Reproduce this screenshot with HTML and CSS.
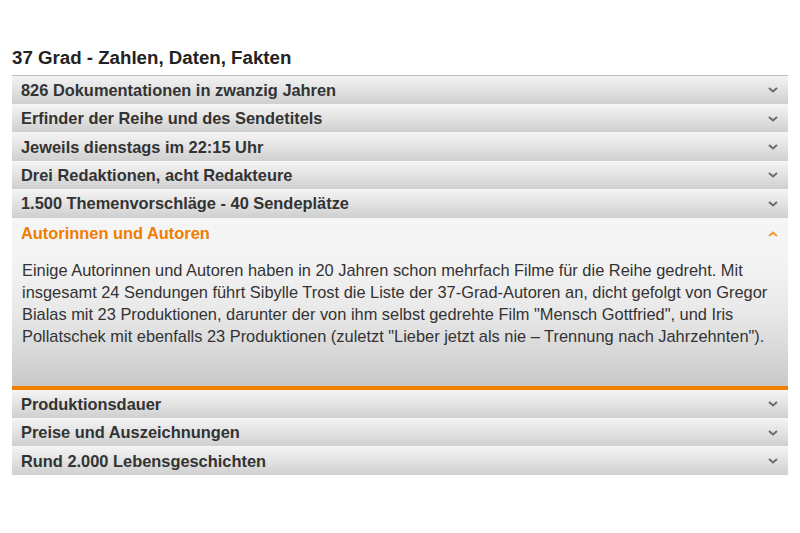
FILE: index.html
```html
<!DOCTYPE html>
<html lang="de">
<head>
<meta charset="utf-8">
<title>37 Grad - Zahlen, Daten, Fakten</title>
<link rel="stylesheet" href="styles.css">
</head>
<body>
<div class="page">
  <h2 class="title">37 Grad - Zahlen, Daten, Fakten</h2>
  <div class="accordion">
    <div class="item"><div class="head"><span>826 Dokumentationen in zwanzig Jahren</span><svg class="chev" viewBox="0 0 10 6"><path d="M1 1 L5 4.5 L9 1"/></svg></div></div>
    <div class="item"><div class="head"><span>Erfinder der Reihe und des Sendetitels</span><svg class="chev" viewBox="0 0 10 6"><path d="M1 1 L5 4.5 L9 1"/></svg></div></div>
    <div class="item"><div class="head"><span>Jeweils dienstags im 22:15 Uhr</span><svg class="chev" viewBox="0 0 10 6"><path d="M1 1 L5 4.5 L9 1"/></svg></div></div>
    <div class="item"><div class="head"><span>Drei Redaktionen, acht Redakteure</span><svg class="chev" viewBox="0 0 10 6"><path d="M1 1 L5 4.5 L9 1"/></svg></div></div>
    <div class="item"><div class="head"><span>1.500 Themenvorschläge - 40 Sendeplätze</span><svg class="chev" viewBox="0 0 10 6"><path d="M1 1 L5 4.5 L9 1"/></svg></div></div>
    <div class="item open">
      <div class="head"><span>Autorinnen und Autoren</span><svg class="chev" viewBox="0 0 10 6"><path d="M1 5 L5 1.5 L9 5"/></svg></div>
      <div class="body"><p>Einige Autorinnen und Autoren haben in 20 Jahren schon mehrfach Filme für die Reihe gedreht. Mit insgesamt 24 Sendungen führt Sibylle Trost die Liste der 37-Grad-Autoren an, dicht gefolgt von Gregor Bialas mit 23 Produktionen, darunter der von ihm selbst gedrehte Film "Mensch Gottfried", und Iris Pollatschek mit ebenfalls 23 Produktionen (zuletzt "Lieber jetzt als nie – Trennung nach Jahrzehnten").</p></div>
    </div>
    <div class="item"><div class="head"><span>Produktionsdauer</span><svg class="chev" viewBox="0 0 10 6"><path d="M1 1 L5 4.5 L9 1"/></svg></div></div>
    <div class="item"><div class="head"><span>Preise und Auszeichnungen</span><svg class="chev" viewBox="0 0 10 6"><path d="M1 1 L5 4.5 L9 1"/></svg></div></div>
    <div class="item"><div class="head"><span>Rund 2.000 Lebensgeschichten</span><svg class="chev" viewBox="0 0 10 6"><path d="M1 1 L5 4.5 L9 1"/></svg></div></div>
  </div>
</div>
</body>
</html>
```

FILE: styles.css
```css
html, body {
  margin: 0;
  padding: 0;
  background: #fff;
}
body {
  font-family: "Liberation Sans", Arial, sans-serif;
  color: #333;
}
.page {
  padding: 47px 12px 0 12px;
}
.title {
  margin: 0;
  font-size: 18.7px;
  font-weight: bold;
  color: #222;
  line-height: 22px;
  height: 28px;
}
.accordion {
  border-top: 1px solid #bdbdbd;
}
.head {
  display: flex;
  align-items: center;
  justify-content: space-between;
  height: 27.4px;
  padding: 0 10px 0 9px;
  border-top: 1px solid #f7f7f7;
  background: linear-gradient(to bottom, #f3f3f3 0%, #e2e2e2 50%, #cfcfcf 100%);
  font-size: 16.4px;
  font-weight: bold;
  color: #333;
}
.item:first-child .head {
  border-top: none;
  height: 28px;
}
.chev {
  width: 10px;
  height: 6px;
  fill: none;
  stroke: #6b6b6b;
  stroke-width: 2;
}
.open .head {
  background: #f5f5f5;
  border-top: none;
  height: 32px;
  color: #f07d00;
}
.open .chev {
  stroke: #f39a2e;
}
.body {
  background: linear-gradient(to bottom, #f5f5f5 0%, #e9e9e9 45%, #c9c9c9 100%);
  padding: 9px 8px 0 10px;
  height: 127px;
  border-bottom: 4px solid #f08000;
}
.body p {
  margin: 0;
  font-size: 16.4px;
  line-height: 22.3px;
  color: #333;
}
```
